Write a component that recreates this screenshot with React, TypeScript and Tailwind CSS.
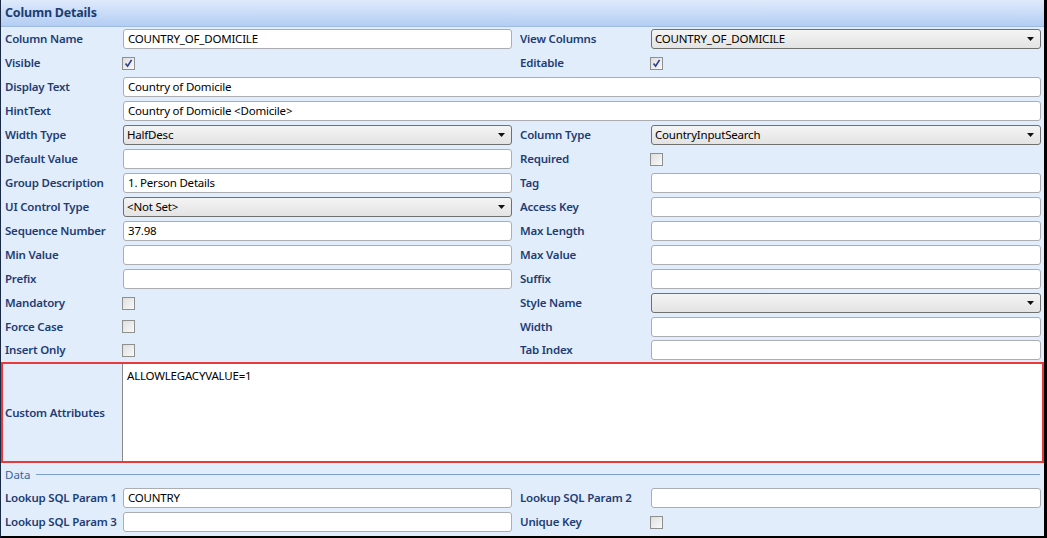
const label = "text-[11.5px] tracking-[-0.2px] font-semibold text-[#1e3d73] whitespace-nowrap";
const inputBox =
  "h-[20px] bg-white border border-[#abadb3] rounded-[3px] px-[4px] flex items-center text-[11.5px] tracking-[-0.2px] text-black whitespace-nowrap overflow-hidden";
const selectBox =
  "h-[20px] bg-gradient-to-b from-[#f4f4f4] to-[#e3e3e3] border border-[#707070] rounded-[3px] pl-[3px] pr-[6px] flex items-center justify-between text-[11.5px] tracking-[-0.2px] text-black whitespace-nowrap";

type Field =
  | { kind: "input"; value?: string }
  | { kind: "select"; value?: string }
  | { kind: "check"; checked?: boolean };

function Arrow() {
  return (
    <svg width="7" height="4" viewBox="0 0 7 4">
      <path d="M0 0 L7 0 L3.5 4 Z" fill="#111" />
    </svg>
  );
}

function Check({ checked }: { checked?: boolean }) {
  return (
    <div className="w-[13px] h-[13px] border border-[#8e8f8f] bg-gradient-to-br from-[#dcdcdc] to-[#fbfbfb] flex items-center justify-center">
      <div className="w-[9px] h-[9px] bg-gradient-to-br from-[#e2e2e2] to-[#f6f6f6] flex items-center justify-center">
        {checked && (
          <svg width="9" height="9" viewBox="0 0 9 9">
            <path d="M1.5 4.6 L3.6 7.2 L7.6 0.8" stroke="#2a3a8c" strokeWidth="1.6" fill="none" />
          </svg>
        )}
      </div>
    </div>
  );
}

function Control({ f }: { f: Field }) {
  if (f.kind === "check")
    return (
      <div className="h-full flex items-center -ml-[1px]">
        <Check checked={f.checked} />
      </div>
    );
  if (f.kind === "select")
    return (
      <div className={selectBox}>
        <span>{f.value}</span>
        <Arrow />
      </div>
    );
  return <div className={inputBox}>{f.value}</div>;
}

function HalfRow({
  l,
  lf,
  r,
  rf,
  h = "h-[24px]",
}: {
  l: string;
  lf: Field;
  r: string;
  rf: Field;
  h?: string;
}) {
  return (
    <div className={`flex items-center ${h}`}>
      <div className={`w-[122px] shrink-0 pl-[4px] ${label}`}>{l}</div>
      <div className="w-[389px] shrink-0">
        <Control f={lf} />
      </div>
      <div className={`w-[139px] shrink-0 pl-[8px] ${label}`}>{r}</div>
      <div className="w-[390px] shrink-0">
        <Control f={rf} />
      </div>
    </div>
  );
}

function FullRow({ l, value }: { l: string; value: string }) {
  return (
    <div className="flex items-center h-[24px]">
      <div className={`w-[122px] shrink-0 pl-[4px] ${label}`}>{l}</div>
      <div className="w-[918px] shrink-0">
        <div className={inputBox}>{value}</div>
      </div>
    </div>
  );
}

export default function App() {
  return (
    <div
      className="w-[1047px] h-[538px] overflow-hidden bg-[#e2edfc] border-l border-l-[#1b2a44] border-r-[3px] border-r-black border-b-2 border-b-black"
      style={{ fontFamily: '"Noto Sans", "Open Sans", sans-serif' }}
    >
      <div className="h-[27px] bg-gradient-to-b from-[#dfeafb] to-[#b3cdf3] border-b border-[#9fbbe2] flex items-center pl-[4px]">
        <span className="text-[12.5px] tracking-[-0.2px] font-bold text-[#1c3d72]">Column Details</span>
      </div>

      <HalfRow l="Column Name" lf={{ kind: "input", value: "COUNTRY_OF_DOMICILE" }} r="View Columns" rf={{ kind: "select", value: "COUNTRY_OF_DOMICILE" }} />
      <HalfRow l="Visible" lf={{ kind: "check", checked: true }} r="Editable" rf={{ kind: "check", checked: true }} />
      <FullRow l="Display Text" value="Country of Domicile" />
      <FullRow l="HintText" value="Country of Domicile <Domicile>" />
      <HalfRow l="Width Type" lf={{ kind: "select", value: "HalfDesc" }} r="Column Type" rf={{ kind: "select", value: "CountryInputSearch" }} />
      <HalfRow l="Default Value" lf={{ kind: "input" }} r="Required" rf={{ kind: "check" }} />
      <HalfRow l="Group Description" lf={{ kind: "input", value: "1. Person Details" }} r="Tag" rf={{ kind: "input" }} />
      <HalfRow l="UI Control Type" lf={{ kind: "select", value: "<Not Set>" }} r="Access Key" rf={{ kind: "input" }} />
      <HalfRow l="Sequence Number" lf={{ kind: "input", value: "37.98" }} r="Max Length" rf={{ kind: "input" }} />
      <HalfRow l="Min Value" lf={{ kind: "input" }} r="Max Value" rf={{ kind: "input" }} />
      <HalfRow l="Prefix" lf={{ kind: "input" }} r="Suffix" rf={{ kind: "input" }} />
      <HalfRow l="Mandatory" lf={{ kind: "check" }} r="Style Name" rf={{ kind: "select", value: "" }} />
      <HalfRow l="Force Case" lf={{ kind: "check" }} r="Width" rf={{ kind: "input" }} h="h-[23px]" />
      <HalfRow l="Insert Only" lf={{ kind: "check" }} r="Tab Index" rf={{ kind: "input" }} />

      <div className="h-[101px] border-2 border-[#e8393d] flex">
        <div className={`w-[120px] shrink-0 pl-[2px] flex items-center border-r border-[#8a8a8a] ${label}`}>
          Custom Attributes
        </div>
        <div className="flex-1 bg-white pl-[4px] pt-[3px] text-[11.5px] tracking-[-0.2px] text-black">ALLOWLEGACYVALUE=1</div>
      </div>

      <div className="h-[23px] flex items-center pl-[4px] pr-[4px] gap-[6px]">
        <span className="text-[11.5px] text-[#3564a8]">Data</span>
        <div className="flex-1 h-px bg-[#7c9fd2]" />
      </div>

      <HalfRow l="Lookup SQL Param 1" lf={{ kind: "input", value: "COUNTRY" }} r="Lookup SQL Param 2" rf={{ kind: "input" }} />
      <HalfRow l="Lookup SQL Param 3" lf={{ kind: "input" }} r="Unique Key" rf={{ kind: "check" }} />
      <HalfRow l="" lf={{ kind: "input" }} r="" rf={{ kind: "input" }} />
    </div>
  );
}
